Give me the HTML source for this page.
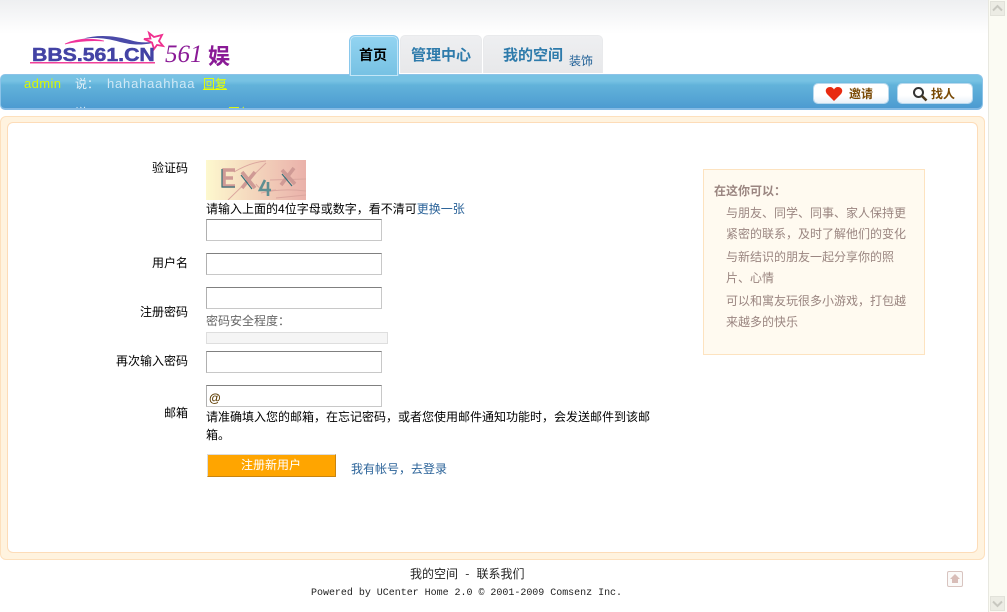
<!DOCTYPE html>
<html>
<head>
<meta charset="utf-8">
<style>
html,body{margin:0;padding:0;width:1007px;height:612px;overflow:hidden;background:#fff}
body{position:relative;font-family:"Liberation Sans","WenQuanYi Zen Hei","Noto Sans CJK SC",sans-serif;font-size:12px;color:#000}
.a{position:absolute;white-space:nowrap;line-height:16px}
.cn{font-family:"WenQuanYi Zen Hei","Noto Sans CJK SC",sans-serif}
.inp{position:absolute;left:206px;width:174px;height:20px;background:#fff;border:1px solid #c8c8c8;border-top-color:#808080;border-left-color:#b0b0b0}
.lbl{position:absolute;right:819px;white-space:nowrap;line-height:16px}
.link{color:#2b6399}
.side{color:#9a8580}
.tab{position:absolute;top:35px;height:38px;background:linear-gradient(#eeeff1,#e7e8ea);border-radius:5px 5px 0 0;border:1px solid #e9eaec;border-bottom:0;box-sizing:border-box}
.tabt{position:absolute;font-size:15px;font-weight:bold;color:#2e7bab;white-space:nowrap;line-height:16px}
.btn{position:absolute;top:84px;height:19px;background:linear-gradient(#ffffff 60%,#e8f1f9);border-radius:4px;box-shadow:0 0 0 1px #b9d9ee}
</style>
</head>
<body>
<div style="position:absolute;left:0;top:0;width:988px;height:34px;background:linear-gradient(#eeeff1,#ffffff)"></div>

<!-- scrollbar -->
<div style="position:absolute;left:988px;top:0;width:19px;height:612px;background:#fbfbf3;border-left:1px solid #e8e8e0;box-sizing:border-box"></div>
<div style="position:absolute;left:990px;top:1px;width:15px;height:15px;background:#ecece4;border:1px solid #e2e2da;box-sizing:border-box"></div>
<svg style="position:absolute;left:990px;top:1px" width="15" height="15"><path d="M3 9.5L7.500 5L12 9.500" fill="none" stroke="#c8c8c0" stroke-width="2"/></svg>
<div style="position:absolute;left:990px;top:596px;width:15px;height:15px;background:#ecece4;border:1px solid #e2e2da;box-sizing:border-box"></div>
<svg style="position:absolute;left:990px;top:596px" width="15" height="15"><path d="M3 5.500L7.500 10L12 5.500" fill="none" stroke="#c8c8c0" stroke-width="2"/></svg>

<!-- logo -->
<svg style="position:absolute;left:28px;top:30px" width="140" height="36">
<path d="M54 9C70 4 88 6 102 10C112 13 120 13 130 11C118 16 104 15 92 12C78 8 66 7 54 9Z" fill="#4a4aa8"/>
<path d="M37 14C48 9 62 8 76 11C62 10 50 11 37 14Z" fill="#f0339a" stroke="#f0339a" stroke-width=".8"/>
<path d="M121 3L126 7L134 5L131 11L135 16L129 15L126 19L124 12.500L116 9L122.500 8.500Z" fill="#fff" stroke="#f0308f" stroke-width="1.800" stroke-linejoin="miter"/>
<rect x="2" y="32" width="125" height="1.500" fill="#f0409a"/>
</svg>
<div class="a" style="left:32px;top:46px;font-size:18px;line-height:18px;font-weight:bold;color:#4343a5;-webkit-text-stroke:.5px #4343a5;transform-origin:0 0;transform:scaleX(1.18)">BBS.561.CN</div>
<div class="a" style="left:165px;top:42px;font-family:'Liberation Serif',serif;font-style:italic;font-size:25px;line-height:26px;color:#8a1a96">561</div>
<div class="a" style="left:208px;top:42px;font-family:'Noto Sans CJK SC',sans-serif;font-size:22px;line-height:26px;font-weight:bold;color:#8a1a96">娱</div>

<!-- blue band -->
<div style="position:absolute;left:0;top:74px;width:983px;height:36px;box-sizing:border-box;border:1px solid #8cc3e8;border-bottom:2px solid #84bae4;border-radius:5px 6px 6px 5px;background:linear-gradient(#77c2e3 0,#77c2e3 6px,#62b3da 10px,#4d9bd1 100%);overflow:hidden">
<div class="a" style="left:23px;top:1px;font-size:13px;letter-spacing:.4px;color:#d8f800">admin</div>
<div class="a cn" style="left:74px;top:1px;color:#e4f1f8">说：</div>
<div class="a" style="left:106px;top:1px;font-size:13px;letter-spacing:.8px;color:#cfe8f6">hahahaahhaa</div>
<div class="a cn" style="left:202px;top:1px;color:#e6ff00;text-decoration:underline">回复</div>
<div class="a cn" style="left:74px;top:30px;color:#e4f1f8">说</div>
<div class="a cn" style="left:227px;top:30px;color:#e6ff00">回复</div>
</div>

<!-- tabs -->
<div class="tab" style="left:400px;width:82px"></div>
<div class="tab" style="left:483px;width:120px"></div>
<div style="position:absolute;left:349px;top:35px;width:50px;height:41px;box-sizing:border-box;background:linear-gradient(#93d4f1,#76c1e3);border:1px solid #8ac8ec;border-bottom:0;border-radius:6px 6px 0 0;box-shadow:inset 0 0 0 1px #c3e6f7"></div>
<div class="tabt cn" style="left:359px;top:47px;color:#000;font-size:14px">首页</div>
<div class="tabt cn" style="left:411px;top:47px">管理中心</div>
<div class="tabt cn" style="left:503px;top:47px">我的空间</div>
<div class="a cn" style="left:569px;top:53px;color:#1d5e95">装饰</div>

<!-- buttons -->
<div class="btn" style="left:814px;width:74px"></div>
<div class="btn" style="left:898px;width:74px"></div>
<svg style="position:absolute;left:825px;top:86px" width="18" height="16"><path d="M9 15L2 8C-1 4 2 1 5 1C7 1 8.300 2 9 3.500C9.700 2 11 1 13 1C16 1 19 4 16 8Z" fill="#e82a10"/></svg>
<div class="a cn" style="left:849px;top:86px;font-weight:bold;color:#7a4a05">邀请</div>
<svg style="position:absolute;left:912px;top:86px" width="16" height="16"><circle cx="6.500" cy="6.500" r="4.500" fill="#fff" stroke="#333" stroke-width="2"/><path d="M10 10L14.500 14.500" stroke="#4a3a20" stroke-width="2.600"/></svg>
<div class="a cn" style="left:931px;top:86px;font-weight:bold;color:#7a4a05">找人</div>

<!-- content -->
<div style="position:absolute;left:0;top:116px;width:985px;height:444px;box-sizing:border-box;background:#fff3df;border:1px solid #fde0bd;border-radius:6px"></div>
<div style="position:absolute;left:7px;top:122px;width:971px;height:431px;box-sizing:border-box;background:#fff;border:1px solid #fddcb8;border-radius:6px"></div>

<!-- form -->
<div class="lbl cn" style="top:160px">验证码</div>
<svg style="position:absolute;left:206px;top:160px" width="100" height="40">
<defs><linearGradient id="g" x1="0" x2="1" y1="0" y2="0"><stop offset="0" stop-color="#fdf8ce"/><stop offset="1" stop-color="#eab1aa"/></linearGradient></defs>
<rect width="100" height="40" fill="url(#g)"/>
<path d="M22 40L60 3M28 12Q45 2 60 1M64 20L100 19M55 33Q75 28 100 31M70 38L100 35M50 24Q55 32 70 30" fill="none" stroke="#dba79f" stroke-width="1"/>
<g fill="none" stroke-width="3.600"><path d="M29 10H18V26H29M18 18H27M36 12L49 28M49 12L36 28M76 10L89 24M88 8L75 25" stroke="#cf9a95"/></g>
<path d="M59 20L54 30H65M62 22V36" fill="none" stroke="#5f8f92" stroke-width="2.600"/>
<path d="M16 9V27H29M35 15L46 29M76 14L86 26" fill="none" stroke="#34707a" stroke-width="1.200"/>
</svg>
<div class="a cn" style="left:206px;top:201px">请输入上面的<span style="font-family:'Liberation Sans'">4</span>位字母或数字，看不清可<span class="link">更换一张</span></div>
<div class="inp" style="top:219px"></div>

<div class="lbl cn" style="top:255px">用户名</div>
<div class="inp" style="top:253px"></div>

<div class="lbl cn" style="top:304px">注册密码</div>
<div class="inp" style="top:287px"></div>
<div class="a cn" style="left:206px;top:313px;color:#666">密码安全程度：</div>
<div style="position:absolute;left:206px;top:332px;width:182px;height:12px;box-sizing:border-box;background:#f5f5f5;border:1px solid #dedede"></div>

<div class="lbl cn" style="top:353px">再次输入密码</div>
<div class="inp" style="top:351px"></div>

<div class="lbl cn" style="top:405px">邮箱</div>
<div class="inp" style="top:385px"></div>
<div class="a" style="left:209px;top:390px;color:#5b3a00;font-size:12px;font-weight:bold">@</div>
<div class="a cn" style="left:206px;top:408px;line-height:18px;white-space:normal;width:450px">请准确填入您的邮箱，在忘记密码，或者您使用邮件通知功能时，会发送邮件到该邮箱。</div>

<div style="position:absolute;left:207px;top:454px;width:129px;height:23px;box-sizing:border-box;background:#ffa500;border:1px solid #dcdcdc;border-right-color:#c88410;border-bottom-color:#c88410"></div>
<div class="a cn" style="left:241px;top:457px;color:#fff">注册新用户</div>
<div class="a cn link" style="left:351px;top:461px">我有帐号，去登录</div>

<!-- side box -->
<div style="position:absolute;left:703px;top:169px;width:222px;height:186px;box-sizing:border-box;background:#fffaf0;border:1px solid #fde3c0"></div>
<div class="a cn side" style="left:714px;top:183px;font-weight:bold">在这你可以：</div>
<div class="a cn side" style="left:726px;top:205px">与朋友、同学、同事、家人保持更</div>
<div class="a cn side" style="left:726px;top:226px">紧密的联系，及时了解他们的变化</div>
<div class="a cn side" style="left:726px;top:249px">与新结识的朋友一起分享你的照</div>
<div class="a cn side" style="left:726px;top:270px">片、心情</div>
<div class="a cn side" style="left:726px;top:293px">可以和寓友玩很多小游戏，打包越</div>
<div class="a cn side" style="left:726px;top:314px">来越多的快乐</div>

<!-- footer -->
<div class="a cn" style="left:410px;top:566px;color:#222;word-spacing:4.500px">我的空间 - 联系我们</div>
<div class="a" style="left:311px;top:586px;font-family:'Liberation Mono',monospace;font-size:10px;letter-spacing:-.02px;color:#222">Powered by UCenter Home 2.0 © 2001-2009 Comsenz Inc.</div>
<div style="position:absolute;left:947px;top:571px;width:16px;height:16px;box-sizing:border-box;border:1px solid #d8c4c0;border-radius:2px;background:#fbfaf9"></div>
<svg style="position:absolute;left:947px;top:571px" width="16" height="16"><path d="M8 3L13 8H11V12H5V8H3Z" fill="#d8bdb8"/></svg>
</body>
</html>
